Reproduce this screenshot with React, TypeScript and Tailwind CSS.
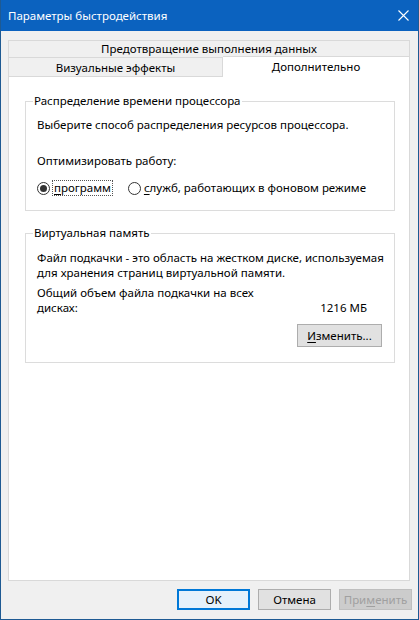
import React from "react";

const font = { fontFamily: '"Noto Sans", "Segoe UI", sans-serif' };

const Radio = ({ checked }: { checked?: boolean }) => (
  <span className="w-[13px] h-[13px] rounded-full border border-[#333] bg-white flex items-center justify-center shrink-0">
    {checked && <span className="w-[7px] h-[7px] rounded-full bg-[#333]" />}
  </span>
);

const GroupBox = ({ title, className, children }: { title: string; className?: string; children: React.ReactNode }) => (
  <fieldset className={`min-w-0 border border-[#dcdcdc] ${className ?? ""}`}>
    <legend className="-ml-[4px] px-[1px] leading-[16px]">{title}</legend>
    {children}
  </fieldset>
);

export default function App() {
  return (
    <div
      className="w-[419px] h-[620px] flex flex-col bg-[#f0f0f0] border-x border-b border-[#1e5a93] text-[11.5px] text-black overflow-hidden"
      style={font}
    >
      {/* Title bar */}
      <div className="h-[31px] shrink-0 bg-[#0b62bf] flex items-center justify-between pl-[8px] pr-[10px] -mx-px">
        <span className="text-white text-[11.5px]">Параметры быстродействия</span>
        <svg width="11" height="11" viewBox="0 0 11 11" className="text-white">
          <path d="M0.5 0.5 L10.5 10.5 M10.5 0.5 L0.5 10.5" stroke="currentColor" strokeWidth="1.1" />
        </svg>
      </div>

      {/* Tabs */}
      <div className="flex-1 flex flex-col pt-[9px] pl-[7px] pr-[8px]">
        <div className="h-[17px] border border-[#d9d9d9] border-b-0 flex items-center justify-center leading-[16px]">
          Предотвращение выполнения данных
        </div>
        <div className="flex h-[19px]">
          <div className="w-[215px] border border-[#d9d9d9] border-b-0 flex items-center justify-center pt-[2px] leading-[16px]">
            Визуальные эффекты
          </div>
          <div className="flex-1 -mt-px h-[21px] bg-white border border-[#d9d9d9] border-b-0 border-l-0 flex items-center justify-center pb-[1px] leading-[16px] relative z-10">
            Дополнительно
          </div>
        </div>

        {/* Tab page */}
        <div className="flex-1 bg-white border border-[#d9d9d9] pt-[16px] pl-[16px] pr-[14px]">
          <GroupBox title="Распределение времени процессора" className="pl-[11px] pr-[11px] pb-[14px]">
            <div className="mt-[8px] leading-[16px]">Выберите способ распределения ресурсов процессора.</div>
            <div className="mt-[20px] leading-[16px]">Оптимизировать работу:</div>
            <div className="mt-[11px] flex items-center h-[16px] whitespace-nowrap">
              <Radio checked />
              <span className="ml-[2px] px-[1px] border border-dotted border-[#555] leading-[14px]">
                <span className="underline underline-offset-2">п</span>рограмм
              </span>
              <span className="ml-[15px]">
                <Radio />
              </span>
              <span className="ml-[2px] px-[1px] leading-[14px]">
                <span className="underline underline-offset-2">с</span>лужб, работающих в фоновом режиме
              </span>
            </div>
          </GroupBox>

          <GroupBox title="Виртуальная память" className="mt-[14px] pl-[11px] pr-[12px] pb-[15px]">
            <div className="mt-[9px] leading-[15px] whitespace-nowrap">
              Файл подкачки - это область на жестком диске, используемая
              <br />
              для хранения страниц виртуальной памяти.
            </div>
            <div className="mt-[5px] flex items-end">
              <div className="w-[222px] leading-[15px]">Общий объем файла подкачки на всех дисках:</div>
              <div className="flex-1 text-right pr-[15px] leading-[15px]">1216 МБ</div>
            </div>
            <div className="mt-[9px] flex justify-end">
              <button className="w-[85px] h-[23px] bg-[#e1e1e1] border border-[#adadad] leading-[16px]">
                <span className="underline underline-offset-2">И</span>зменить...
              </button>
            </div>
          </GroupBox>
        </div>
      </div>

      {/* Footer buttons */}
      <div className="h-[38px] shrink-0 flex justify-end items-start pt-[8px] pr-[6px] gap-[8px]">
        <button className="w-[73px] h-[21px] bg-[#e5f1fb] border-2 border-[#0078d7] leading-[16px]">OK</button>
        <button className="w-[73px] h-[21px] bg-[#e1e1e1] border border-[#adadad] leading-[16px]">Отмена</button>
        <button className="w-[73px] h-[21px] bg-[#cccccc] border border-[#bfbfbf] text-[#a0a0a0] leading-[16px]">
          При<span className="underline underline-offset-2">м</span>енить
        </button>
      </div>
    </div>
  );
}
